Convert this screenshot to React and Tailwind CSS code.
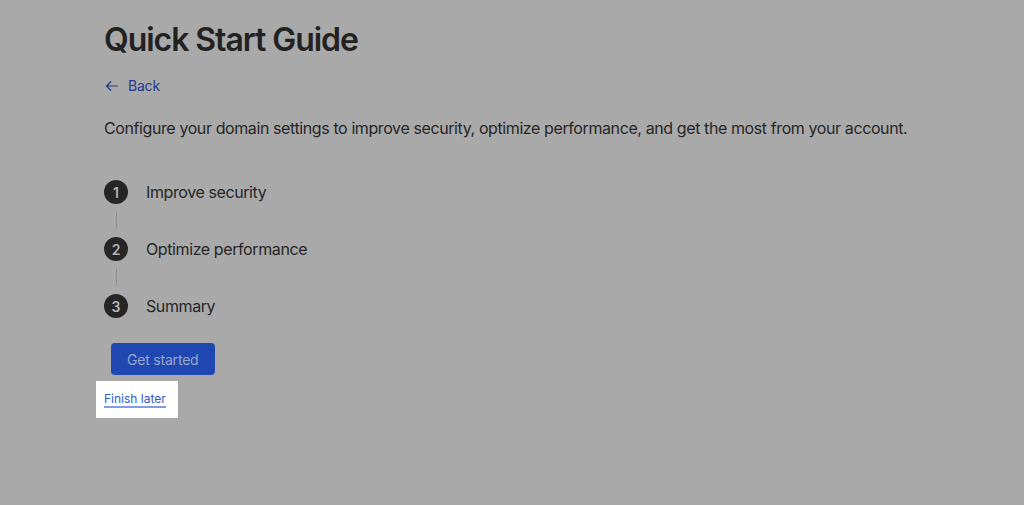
import React from "react";

function Step({ n, label, last }) {
  return (
    <div className="flex flex-col">
      <div className="flex items-center gap-[18px]">
        <div className="flex h-6 w-6 items-center justify-center rounded-full bg-[#262626] text-[14px] font-semibold text-[#b5b5b5]">
          {n}
        </div>
        <span className="text-[16px] tracking-[-0.4px] text-[#262626]">{label}</span>
      </div>
      {!last && (
        <div className="ml-[11.5px] my-[8px] h-[17px] w-px bg-[#8c8c8c]" />
      )}
    </div>
  );
}

export default function App() {
  return (
    <div
      className="min-h-[505px] w-full bg-[#a9a9a9]"
      style={{ fontFamily: "Inter, 'Noto Sans', sans-serif" }}
    >
      <div className="px-[104px] pt-[20px]">
        <h1 className="text-[32px] font-semibold leading-[40px] tracking-[-1.05px] text-[#222222]">
          Quick Start Guide
        </h1>
        <div className="mt-[16px] flex items-center gap-[8px] text-[14px] leading-[20px] tracking-[-0.2px] text-[#1f3a8f]">
          <svg width="16" height="16" viewBox="0 0 16 16" fill="none" stroke="currentColor" strokeWidth="1.2">
            <path d="M14 8H2.5M7 3.5L2.5 8L7 12.5" />
          </svg>
          <span>Back</span>
        </div>
        <p className="mt-[20px] whitespace-nowrap text-[16px] leading-[24px] tracking-[-0.4px] text-[#262626]">
          Configure your domain settings to improve security, optimize performance, and get the most from your account.
        </p>
        <div className="mt-[40px] flex flex-col">
          <Step n="1" label="Improve security" />
          <Step n="2" label="Optimize performance" />
          <Step n="3" label="Summary" last />
        </div>
        <button className="ml-[7px] mt-[25px] h-[32px] rounded-[4px] bg-[#2148b0] px-[16px] text-[14px] tracking-[-0.2px] text-[#97a7cf]">
          Get started
        </button>
      </div>
      <div className="ml-[96px] mt-[6px] flex h-[37px] w-[82px] items-center bg-white pl-[8px]">
        <span className="border-b-2 border-[#7f9de0] text-[12px] leading-[15px] text-[#2c5ad0]">
          Finish later
        </span>
      </div>
    </div>
  );
}
